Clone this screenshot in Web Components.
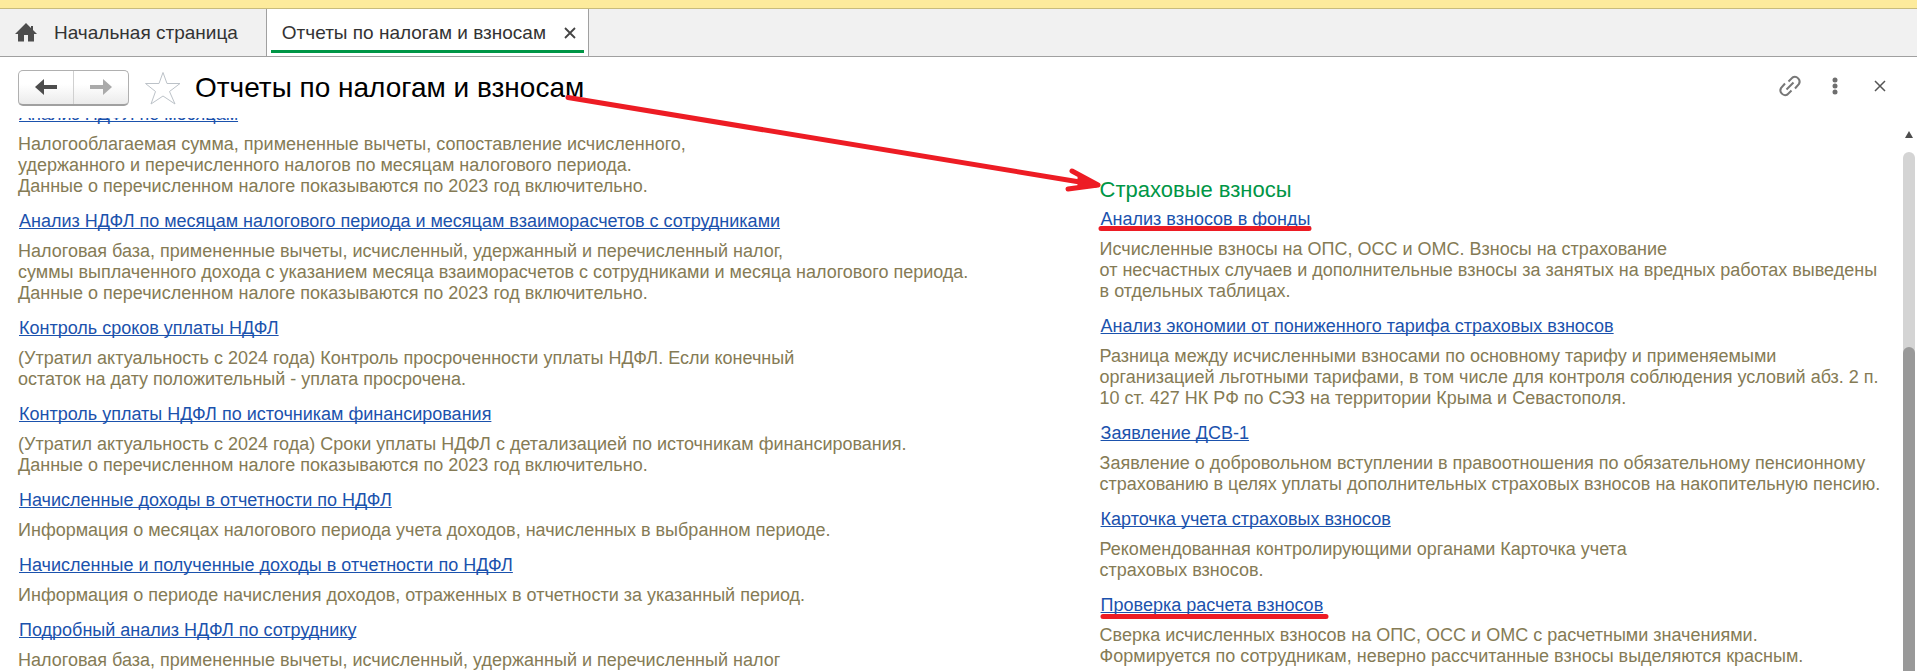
<!DOCTYPE html>
<html lang="ru">
<head>
<meta charset="utf-8">
<title>Отчеты по налогам и взносам</title>
<style>
  body { margin: 0; font: 18px/21px "Liberation Sans", Arial, sans-serif; background: #fff; }
</style>
</head>
<body>
<report-window>
  <tab-strip slot="tabs"></tab-strip>
  <form-header slot="header">Отчеты по налогам и взносам</form-header>
  <report-group>
    <report-item name="Анализ НДФЛ по месяцам">Налогооблагаемая сумма, примененные вычеты, сопоставление исчисленного,<br>удержанного и перечисленного налогов по месяцам налогового периода.<br>Данные о перечисленном налоге показываются по 2023 год включительно.</report-item>
    <report-item name="Анализ НДФЛ по месяцам налогового периода и месяцам взаиморасчетов с сотрудниками">Налоговая база, примененные вычеты, исчисленный, удержанный и перечисленный налог,<br>суммы выплаченного дохода с указанием месяца взаиморасчетов с сотрудниками и месяца налогового периода.<br>Данные о перечисленном налоге показываются по 2023 год включительно.</report-item>
    <report-item name="Контроль сроков уплаты НДФЛ">(Утратил актуальность с 2024 года) Контроль просроченности уплаты НДФЛ. Если конечный<br>остаток на дату положительный - уплата просрочена.</report-item>
    <report-item name="Контроль уплаты НДФЛ по источникам финансирования">(Утратил актуальность с 2024 года) Сроки уплаты НДФЛ с детализацией по источникам финансирования.<br>Данные о перечисленном налоге показываются по 2023 год включительно.</report-item>
    <report-item name="Начисленные доходы в отчетности по НДФЛ">Информация о месяцах налогового периода учета доходов, начисленных в выбранном периоде.</report-item>
    <report-item name="Начисленные и полученные доходы в отчетности по НДФЛ">Информация о периоде начисления доходов, отраженных в отчетности за указанный период.</report-item>
    <report-item name="Подробный анализ НДФЛ по сотруднику">Налоговая база, примененные вычеты, исчисленный, удержанный и перечисленный налог</report-item>
  </report-group>
  <report-group class="second" heading="Страховые взносы">
    <report-item name="Анализ взносов в фонды">Исчисленные взносы на ОПС, ОСС и ОМС. Взносы на страхование<br>от несчастных случаев и дополнительные взносы за занятых на вредных работах выведены<br>в отдельных таблицах.</report-item>
    <report-item name="Анализ экономии от пониженного тарифа страховых взносов">Разница между исчисленными взносами по основному тарифу и применяемыми<br>организацией льготными тарифами, в том числе для контроля соблюдения условий абз. 2 п.<br>10 ст. 427 НК РФ по СЭЗ на территории Крыма и Севастополя.</report-item>
    <report-item name="Заявление ДСВ-1">Заявление о добровольном вступлении в правоотношения по обязательному пенсионному<br>страхованию в целях уплаты дополнительных страховых взносов на накопительную пенсию.</report-item>
    <report-item name="Карточка учета страховых взносов">Рекомендованная контролирующими органами Карточка учета<br>страховых взносов.</report-item>
    <report-item name="Проверка расчета взносов">Сверка исчисленных взносов на ОПС, ОСС и ОМС с расчетными значениями.<br>Формируется по сотрудникам, неверно рассчитанные взносы выделяются красным.</report-item>
  </report-group>
  <pen-marks slot="marks"></pen-marks>
</report-window>

<script>
const define = (name, html, setup) => {
  const template = document.createElement('template');
  template.innerHTML = html;
  customElements.define(name, class extends HTMLElement {
    constructor() {
      super();
      this.attachShadow({ mode: 'open' }).append(template.content.cloneNode(true));
    }
    connectedCallback() {
      if (setup) setup(this, this.shadowRoot);
    }
  });
};

define('report-window', `
  <style>
    :host { display: flex; flex-direction: column; height: 100vh; position: relative; overflow: hidden; }
    .top { flex: none; height: 8px; background: #fdeb9c; border-bottom: 1px solid #c8bc7c; }
    .view { flex: 1; min-height: 0; display: flex; }
    .scroll { flex: 1; min-width: 0; overflow: hidden; }
    .columns { display: grid; grid-template-columns: 23fr 17fr; padding: 0 4px 0 18px; margin-top: -14px; }
    ::slotted(.second) { padding-top: 73px; }
  </style>
  <div class="top"></div>
  <slot name="tabs"></slot>
  <slot name="header"></slot>
  <div class="view">
    <div class="scroll"><div class="columns"><slot></slot></div></div>
    <scroll-rail></scroll-rail>
  </div>
  <slot name="marks"></slot>
`);

define('tab-strip', `
  <style>
    :host { display: block; flex: none; background: #f1f1f1; border-bottom: 1px solid #a0a0a0; }
    nav { display: flex; height: 47px; }
    button { font: 19px/24px "Liberation Sans", Arial, sans-serif; color: #333; border: 0; background: none; padding: 0; }
    .tab { display: flex; align-items: center; }
    .home { gap: 17px; padding: 0 28px 0 15px; }
    .active { position: relative; gap: 18px; padding: 0 12px 0 15px; background: #fff; border: solid #a0a0a0; border-width: 0 1px; }
    .active::after { content: ""; position: absolute; left: 4px; right: 4px; bottom: 3px; height: 3px; background: #009646; }
    svg { display: block; }
  </style>
  <nav>
    <button class="tab home">
      <svg width="22" height="20" viewBox="0 0 22 20"><path d="M11 0 0 11h3v7.500h6V12h4v6.500h6V11h3l-4-4V3h-2v2z" fill="#4d4d4d"/></svg>
      Начальная страница
    </button>
    <div class="tab active">
      <button>Отчеты по налогам и взносам</button>
      <button aria-label="Закрыть вкладку"><svg width="12" height="12" viewBox="0 0 12 12"><path d="M1 1l10 10M11 1 1 11" stroke="#444" stroke-width="1.800"/></svg></button>
    </div>
  </nav>
`);

define('form-header', `
  <style>
    :host { display: flex; flex: none; align-items: center; height: 61px; padding: 0 22px 0 18px; box-sizing: border-box; }
    .history { display: flex; box-sizing: border-box; height: 36px; border: 1px solid #b0b0b0; border-bottom: 2px solid #a0a0a0; border-radius: 5px; background: linear-gradient(#fff 40%, #ebebeb); }
    button { display: flex; align-items: center; justify-content: center; padding: 0; border: 0; background: none; }
    .history button { width: 54px; }
    .history button + button { width: 55px; border-left: 1px solid #d0d0d0; }
    .star { margin: 0 14px 0 16px; }
    h1 { flex: 1; margin: 0; font-size: 28px; line-height: 32px; font-weight: 400; color: #000; white-space: nowrap; }
    .tools { display: flex; gap: 15px; padding-bottom: 3px; }
    .tools button { width: 30px; height: 30px; }
    svg { display: block; }
  </style>
  <div class="history">
    <button aria-label="Назад"><svg width="22" height="16" viewBox="0 0 22 16"><path d="M0 8 9 0v6h13v4H9v6z" fill="#4d4d4d"/></svg></button>
    <button aria-label="Вперед"><svg width="22" height="16" viewBox="0 0 22 16"><path d="M22 8 13 0v6H0v4h13v6z" fill="#aaa"/></svg></button>
  </div>
  <button class="star" aria-label="В избранное"><svg width="36" height="34" viewBox="0 0 36 34"><path d="M18 1.500l4 11h13l-10.500 8L30 33l-12-8-12 8 4.500-12.500L.500 12.500H14z" fill="#fff" stroke="#bcc2c8"/></svg></button>
  <h1><slot></slot></h1>
  <div class="tools">
    <button aria-label="Получить ссылку"><svg width="24" height="24" viewBox="0 0 24 24" fill="none" stroke="#777" stroke-width="2"><path d="M8.500 15.500l7-7M10.500 7.500l4-4a4.800 4.800 0 0 1 6.500 6.500l-4 4.500M7 9.500l-4 4.500a4.800 4.800 0 0 0 6.500 6.500l4-4"/></svg></button>
    <button aria-label="Еще"><svg width="6" height="18" viewBox="0 0 6 18" fill="#6e6e6e"><circle cx="3" cy="3" r="2.500"/><circle cx="3" cy="9" r="2.500"/><circle cx="3" cy="15" r="2.500"/></svg></button>
    <button aria-label="Закрыть"><svg width="12" height="12" viewBox="0 0 12 12"><path d="M1 1l10 10M11 1 1 11" stroke="#555" stroke-width="1.500"/></svg></button>
  </div>
`);

define('report-group', `
  <style>
    :host { display: block; min-width: 0; }
    h2 { margin: 0 0 7px; font-size: 22px; line-height: 25px; font-weight: 400; color: #009646; }
    h2:empty { display: none; }
  </style>
  <h2></h2>
  <slot></slot>
`, (host, root) => {
  root.querySelector('h2').textContent = host.getAttribute('heading') || '';
});

define('report-item', `
  <style>
    :host { display: block; margin-bottom: 14px; white-space: nowrap; }
    .name { margin-bottom: 9px; padding-left: 1px; }
    a { color: #1b52ad; text-decoration: underline; text-decoration-thickness: 1px; text-underline-offset: 1px; text-decoration-skip-ink: none; }
    .about { color: #857b55; }
  </style>
  <div class="name"><a href="#"></a></div>
  <div class="about"><slot></slot></div>
`, (host, root) => {
  root.querySelector('a').textContent = host.getAttribute('name');
});

define('scroll-rail', `
  <style>
    :host { display: flex; flex-direction: column; align-items: center; flex: none; width: 12px; padding: 13px 2px 0 0; }
    svg { flex: none; margin-bottom: 14px; }
    .track { flex: 1; width: 12px; border-radius: 6px 6px 0 0; background: #d4d4d4; padding-top: 195px; box-sizing: border-box; display: flex; }
    .thumb { flex: 1; border-radius: 6px 6px 0 0; background: #999; }
  </style>
  <svg width="8" height="7" viewBox="0 0 8 7"><path d="M4 0l4 7H0z" fill="#4d4d4d"/></svg>
  <div class="track"><div class="thumb"></div></div>
`);

// hand-drawn marks over the form
define('pen-marks', `
  <style>
    :host { position: absolute; inset: 0; pointer-events: none; }
    svg { display: block; width: 100%; height: 100%; }
  </style>
  <svg fill="none" stroke="#ed1c24" stroke-width="5" stroke-linecap="round" stroke-linejoin="round">
    <path d="M568 97.500 1098 185M1072 171l26 14-30 4"/>
    <path d="M1080 178l16 7-16 1z" fill="#ed1c24"/>
    <path d="M1101 228.500h208M1103 616.500h223"/>
  </svg>
`);
</script>
</body>
</html>
